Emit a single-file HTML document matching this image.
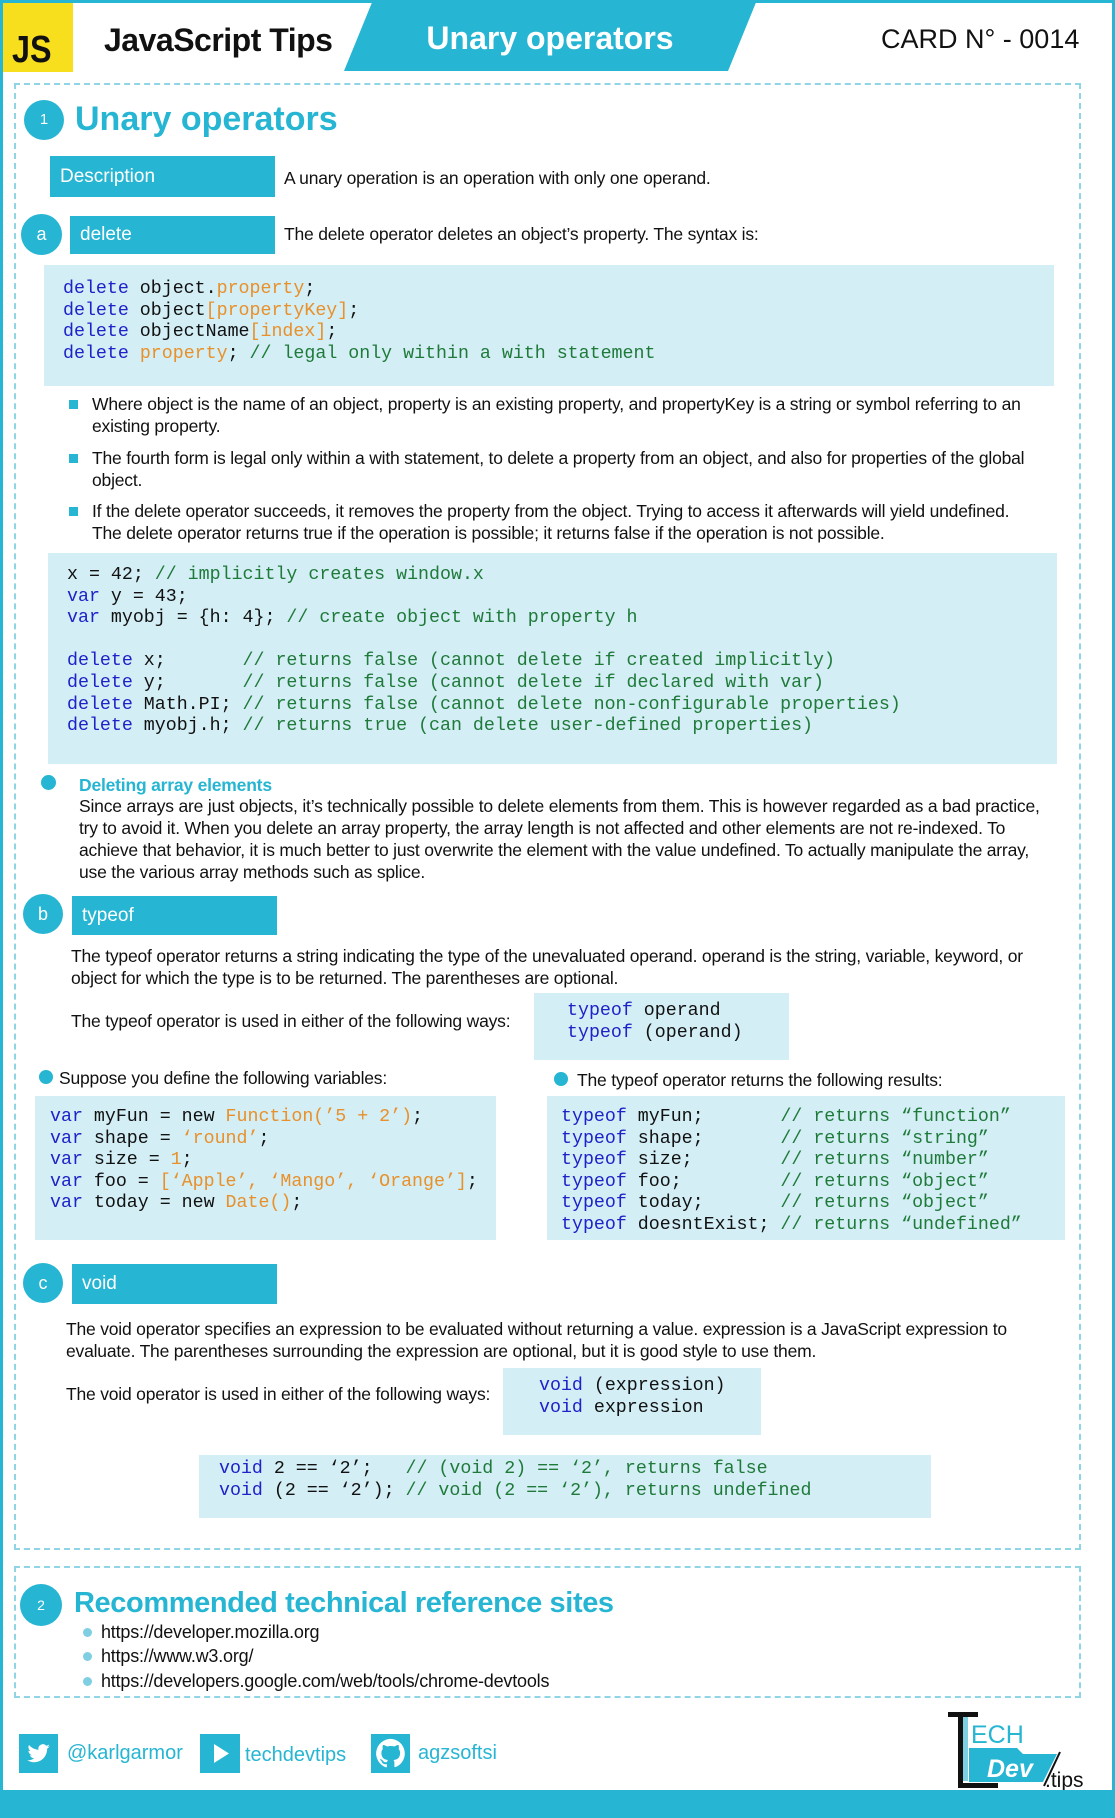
<!DOCTYPE html>
<html><head><meta charset="utf-8"><style>
*{margin:0;padding:0;box-sizing:border-box}
body{width:1115px;height:1818px;position:relative;background:#fff;font-family:"Liberation Sans",sans-serif;color:#111;overflow:hidden}
.a{position:absolute}
.frame{left:0;top:0;width:1115px;height:1818px;border:3px solid #26b5d2;border-bottom:28px solid #26b5d2}
.dash{border:2px dashed #8fd5e5}
.circ{border-radius:50%;background:#26b5d2;color:#fff;text-align:center;font-size:15px}
.lbl{color:#fff;font-size:19px;line-height:40px;padding-left:10px;background:#26b5d2}
.t{font-size:17.5px;line-height:22px;white-space:nowrap;letter-spacing:-0.2px}
.code{background:#d3eef5}
pre{position:absolute;font-family:"Liberation Mono",monospace;font-size:18.3px;line-height:21.6px;color:#111}
.k{color:#1e22c8}.o{color:#e8902a}.c{color:#1f7a3a}
.sq{width:9px;height:9px;background:#26b5d2}
.dot{width:14px;height:14px;border-radius:50%;background:#26b5d2}
.sdot{width:9px;height:9px;border-radius:50%;background:#7fcfe2}
.ico{background:#26b5d2;width:39px;height:39px}
.ft{color:#26b5d2;font-size:20px}
</style></head><body>
<div class="a frame"></div>
<div class="a" style="left:3px;top:3px;width:70px;height:69px;background:#f7df1e"></div>
<div class="a" style="left:12px;top:30px;font-size:38px;font-weight:bold;color:#111;line-height:40px;transform:scaleX(0.85);transform-origin:left">JS</div>
<div class="a" style="left:104px;top:20px;font-size:32px;font-weight:bold;line-height:40px;letter-spacing:-0.5px">JavaScript Tips</div>
<svg class="a" style="left:0;top:0" width="1115" height="75"><polygon points="373,0 757,0 728,71 344,71" fill="#26b5d2"/></svg>
<div class="a" style="left:380px;top:18px;width:340px;text-align:center;color:#fff;font-size:32px;font-weight:bold;line-height:40px">Unary operators</div>
<div class="a" style="left:881px;top:19px;font-size:27px;line-height:40px">CARD N° - 0014</div>

<div class="a dash" style="left:14px;top:83px;width:1067px;height:1467px"></div>
<div class="a circ" style="left:24px;top:100px;width:40px;height:40px;line-height:40px">1</div>
<div class="a" style="left:75px;top:98px;font-size:34px;font-weight:bold;color:#26b5d2;line-height:42px">Unary operators</div>

<div class="a lbl" style="left:50px;top:156px;width:225px;height:41px;line-height:41px">Description</div>
<div class="a t" style="left:284px;top:167px">A unary operation is an operation with only one operand.</div>

<div class="a circ" style="left:21px;top:214px;width:41px;height:41px;line-height:41px;font-size:18px">a</div>
<div class="a lbl" style="left:70px;top:216px;width:205px;height:38px;line-height:38px">delete</div>
<div class="a t" style="left:284px;top:223px">The delete operator deletes an object’s property. The syntax is:</div>

<div class="a code" style="left:44px;top:265px;width:1010px;height:121px"></div>
<pre style="left:63px;top:279px"><span class="k">delete</span> object.<span class="o">property</span>;
<span class="k">delete</span> object<span class="o">[propertyKey]</span>;
<span class="k">delete</span> objectName<span class="o">[index]</span>;
<span class="k">delete</span> <span class="o">property</span>; <span class="c">// legal only within a with statement</span></pre>

<div class="a sq" style="left:69px;top:400px"></div>
<div class="a t" style="left:92px;top:393px">Where object is the name of an object, property is an existing property, and propertyKey is a string or symbol referring to an<br>existing property.</div>
<div class="a sq" style="left:69px;top:454px"></div>
<div class="a t" style="left:92px;top:447px">The fourth form is legal only within a with statement, to delete a property from an object, and also for properties of the global<br>object.</div>
<div class="a sq" style="left:69px;top:507px"></div>
<div class="a t" style="left:92px;top:500px">If the delete operator succeeds, it removes the property from the object. Trying to access it afterwards will yield undefined.<br>The delete operator returns true if the operation is possible; it returns false if the operation is not possible.</div>

<div class="a code" style="left:48px;top:553px;width:1009px;height:211px"></div>
<pre style="left:67px;top:565px">x = 42; <span class="c">// implicitly creates window.x</span>
<span class="k">var</span> y = 43;
<span class="k">var</span> myobj = {h: 4}; <span class="c">// create object with property h</span>

<span class="k">delete</span> x;       <span class="c">// returns false (cannot delete if created implicitly)</span>
<span class="k">delete</span> y;       <span class="c">// returns false (cannot delete if declared with var)</span>
<span class="k">delete</span> Math.PI; <span class="c">// returns false (cannot delete non-configurable properties)</span>
<span class="k">delete</span> myobj.h; <span class="c">// returns true (can delete user-defined properties)</span></pre>

<div class="a dot" style="left:41px;top:775px;width:15px;height:15px"></div>
<div class="a t" style="left:79px;top:774px;color:#26b5d2;font-weight:bold">Deleting array elements</div>
<div class="a t" style="left:79px;top:795px">Since arrays are just objects, it’s technically possible to delete elements from them. This is however regarded as a bad practice,<br>try to avoid it. When you delete an array property, the array length is not affected and other elements are not re-indexed. To<br>achieve that behavior, it is much better to just overwrite the element with the value undefined. To actually manipulate the array,<br>use the various array methods such as splice.</div>

<div class="a circ" style="left:23px;top:894px;width:40px;height:40px;line-height:40px;font-size:18px">b</div>
<div class="a lbl" style="left:72px;top:896px;width:205px;height:39px;line-height:39px">typeof</div>
<div class="a t" style="left:71px;top:945px">The typeof operator returns a string indicating the type of the unevaluated operand. operand is the string, variable, keyword, or<br>object for which the type is to be returned. The parentheses are optional.</div>
<div class="a t" style="left:71px;top:1010px">The typeof operator is used in either of the following ways:</div>
<div class="a code" style="left:534px;top:993px;width:255px;height:67px"></div>
<pre style="left:567px;top:1001px"><span class="k">typeof</span> operand
<span class="k">typeof</span> (operand)</pre>

<div class="a dot" style="left:39px;top:1070px"></div>
<div class="a t" style="left:59px;top:1067px">Suppose you define the following variables:</div>
<div class="a dot" style="left:554px;top:1072px"></div>
<div class="a t" style="left:577px;top:1069px">The typeof operator returns the following results:</div>

<div class="a code" style="left:35px;top:1096px;width:461px;height:144px"></div>
<pre style="left:50px;top:1107px"><span class="k">var</span> myFun = new <span class="o">Function(’5 + 2’)</span>;
<span class="k">var</span> shape = <span class="o">‘round’</span>;
<span class="k">var</span> size = <span class="o">1</span>;
<span class="k">var</span> foo = <span class="o">[‘Apple’, ‘Mango’, ‘Orange’]</span>;
<span class="k">var</span> today = new <span class="o">Date()</span>;</pre>

<div class="a code" style="left:547px;top:1096px;width:518px;height:144px"></div>
<pre style="left:561px;top:1107px"><span class="k">typeof</span> myFun;       <span class="c">// returns “function”</span>
<span class="k">typeof</span> shape;       <span class="c">// returns “string”</span>
<span class="k">typeof</span> size;        <span class="c">// returns “number”</span>
<span class="k">typeof</span> foo;         <span class="c">// returns “object”</span>
<span class="k">typeof</span> today;       <span class="c">// returns “object”</span>
<span class="k">typeof</span> doesntExist; <span class="c">// returns “undefined”</span></pre>

<div class="a circ" style="left:23px;top:1263px;width:40px;height:40px;line-height:40px;font-size:18px">c</div>
<div class="a lbl" style="left:72px;top:1264px;width:205px;height:40px">void</div>
<div class="a t" style="left:66px;top:1318px">The void operator specifies an expression to be evaluated without returning a value. expression is a JavaScript expression to<br>evaluate. The parentheses surrounding the expression are optional, but it is good style to use them.</div>
<div class="a t" style="left:66px;top:1383px">The void operator is used in either of the following ways:</div>
<div class="a code" style="left:503px;top:1368px;width:258px;height:67px"></div>
<pre style="left:539px;top:1376px"><span class="k">void</span> (expression)
<span class="k">void</span> expression</pre>

<div class="a code" style="left:199px;top:1455px;width:732px;height:63px"></div>
<pre style="left:219px;top:1459px"><span class="k">void</span> 2 == ‘2’;   <span class="c">// (void 2) == ‘2’, returns false</span>
<span class="k">void</span> (2 == ‘2’); <span class="c">// void (2 == ‘2’), returns undefined</span></pre>

<div class="a dash" style="left:14px;top:1566px;width:1067px;height:132px"></div>
<div class="a circ" style="left:20px;top:1584px;width:42px;height:42px;line-height:42px;font-size:14px">2</div>
<div class="a" style="left:74px;top:1585px;font-size:29px;font-weight:bold;color:#26b5d2;line-height:36px;letter-spacing:-0.4px">Recommended technical reference sites</div>
<div class="a sdot" style="left:83px;top:1628px"></div>
<div class="a t" style="left:101px;top:1621px;font-size:18px">https://developer.mozilla.org</div>
<div class="a sdot" style="left:83px;top:1652px"></div>
<div class="a t" style="left:101px;top:1645px;font-size:18px">https://www.w3.org/</div>
<div class="a sdot" style="left:83px;top:1677px"></div>
<div class="a t" style="left:101px;top:1670px;font-size:18px">https://developers.google.com/web/tools/chrome-devtools</div>

<div class="a ico" style="left:19px;top:1734px"><svg width="39" height="39" viewBox="0 0 24 24"><path fill="#fff" d="M19 7.5c-.5.2-1 .4-1.6.5.6-.4 1-.9 1.2-1.5-.5.3-1.1.5-1.8.7a2.8 2.8 0 0 0-4.8 2.5C9.7 9.6 7.6 8.5 6.2 6.8c-.8 1.300-.3 2.900.9 3.700-.4 0-.9-.1-1.300-.3 0 1.300 1 2.500 2.200 2.800-.4.1-.9.1-1.300 0 .4 1.100 1.400 1.900 2.600 1.900A5.700 5.700 0 0 1 5 16.100c1.300.8 2.700 1.300 4.300 1.300 5.200 0 8.100-4.400 8-8.300.6-.4 1.100-1 1.700-1.600z"/></svg></div>
<div class="a ft" style="left:67px;top:1742px">@karlgarmor</div>
<div class="a ico" style="left:200px;top:1734px;width:40px"><svg width="40" height="39"><polygon points="14,10 29,19.5 14,29" fill="#fff"/></svg></div>
<div class="a ft" style="left:245px;top:1744px">techdevtips</div>
<div class="a ico" style="left:371px;top:1734px"><svg width="39" height="39" viewBox="0 0 24 24"><path fill="#fff" d="M12 3a9 9 0 0 0-2.8 17.5c.4.1.6-.2.6-.4v-1.6c-2.5.5-3-1.1-3-1.1-.4-1-1-1.3-1-1.3-.8-.6.1-.6.1-.6.9.1 1.4.9 1.4.9.8 1.4 2.1 1 2.6.8.1-.6.3-1 .6-1.2-2-.2-4.1-1-4.1-4.4 0-1 .3-1.8.9-2.4-.1-.2-.4-1.1.1-2.4 0 0 .8-.2 2.5.9a8.6 8.6 0 0 1 4.5 0c1.7-1.1 2.5-.9 2.5-.9.5 1.3.2 2.2.1 2.4.6.6.9 1.4.9 2.4 0 3.4-2.1 4.2-4.1 4.4.3.3.6.8.6 1.6v2.4c0 .2.2.5.6.4A9 9 0 0 0 12 3z"/></svg></div>
<div class="a ft" style="left:418px;top:1742px">agzsoftsi</div>

<svg class="a" style="left:945px;top:1708px" width="150" height="82">
<rect x="3" y="4" width="30" height="5" fill="#111"/>
<rect x="13" y="4" width="5" height="76" fill="#111"/>
<rect x="13" y="75" width="40" height="5" fill="#111"/>
<rect x="18" y="9" width="5" height="64" fill="#7fcfe2"/>
<text x="26" y="35" font-family="Liberation Sans" font-size="25" fill="#26b5d2">ECH</text>
<polygon points="24,40 72,40 78,46 112,46 98,74 24,74" fill="#26b5d2"/>
<text x="42" y="69" font-family="Liberation Sans" font-size="25" font-style="italic" font-weight="bold" fill="#fff">Dev</text>
<line x1="115" y1="44" x2="99" y2="78" stroke="#111" stroke-width="2"/>
<text x="100" y="79" font-family="Liberation Sans" font-size="21" fill="#111">.tips</text>
</svg>
</body></html>
